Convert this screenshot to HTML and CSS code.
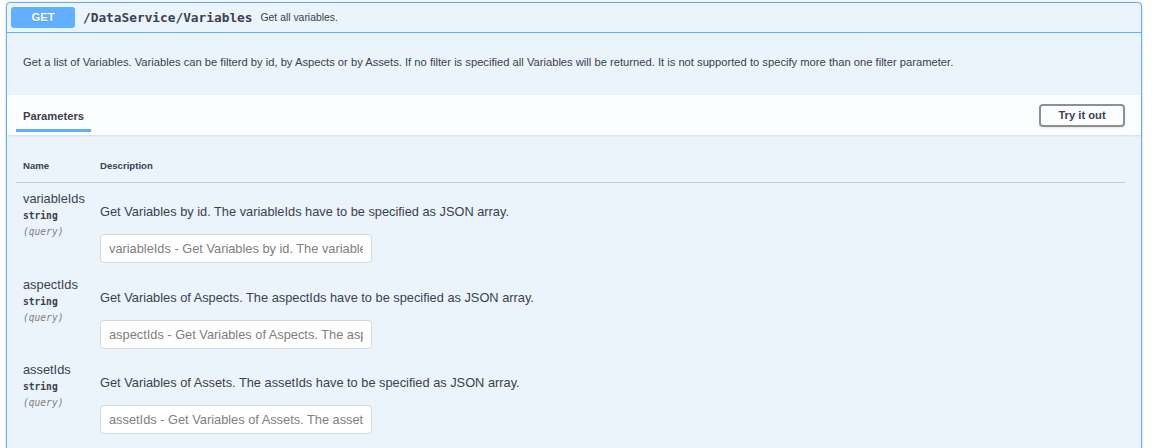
FILE: index.html
```html
<!DOCTYPE html>
<html>
<head>
<meta charset="utf-8">
<link rel="stylesheet" href="styles.css">
</head>
<body>
<div class="opblock">
  <div class="summary">
    <span class="method">GET</span>
    <span class="path">/DataService/Variables</span>
    <span class="summary-desc">Get all variables.</span>
  </div>
  <div class="description">
    <p>Get a list of Variables. Variables can be filterd by id, by Aspects or by Assets. If no filter is specified all Variables will be returned. It is not supported to specify more than one filter parameter.</p>
  </div>
  <div class="section-header">
    <div class="tab">Parameters</div>
    <button class="try-btn">Try it out</button>
  </div>
  <div class="params">
    <div class="param-head">
      <div class="col-name">Name</div>
      <div class="col-desc">Description</div>
    </div>
    <div class="param-row">
      <div class="col-name">
        <div class="pname">variableIds</div>
        <div class="ptype">string</div>
        <div class="pin">(query)</div>
      </div>
      <div class="col-desc">
        <p class="pdesc">Get Variables by id. The variableIds have to be specified as JSON array.</p>
        <input class="pinput" type="text" placeholder="variableIds - Get Variables by id. The variableIds have to be specified as JSON array.">
      </div>
    </div>
    <div class="param-row">
      <div class="col-name">
        <div class="pname">aspectIds</div>
        <div class="ptype">string</div>
        <div class="pin">(query)</div>
      </div>
      <div class="col-desc">
        <p class="pdesc">Get Variables of Aspects. The aspectIds have to be specified as JSON array.</p>
        <input class="pinput" type="text" placeholder="aspectIds - Get Variables of Aspects. The aspectIds have to be specified as JSON array.">
      </div>
    </div>
    <div class="param-row">
      <div class="col-name">
        <div class="pname">assetIds</div>
        <div class="ptype">string</div>
        <div class="pin">(query)</div>
      </div>
      <div class="col-desc">
        <p class="pdesc">Get Variables of Assets. The assetIds have to be specified as JSON array.</p>
        <input class="pinput" type="text" placeholder="assetIds - Get Variables of Assets. The assetIds have to be specified as JSON array.">
      </div>
    </div>
  </div>
</div>
</body>
</html>
```

FILE: styles.css
```css
* { box-sizing: border-box; }
html, body { margin: 0; padding: 0; background: #fff; }
body {
  font-family: "Liberation Sans", Arial, sans-serif;
  color: #3b4151;
  padding: 2px 10px 0 6px;
}
.opblock {
  border: 1px solid #61affe;
  border-radius: 4px;
  background: #ebf3fb;
  box-shadow: 0 0 3px rgba(0,0,0,.19);
  min-height: 460px;
}
.summary {
  display: flex;
  align-items: center;
  padding: 4px 4px;
  border-bottom: 1px solid #61affe;
}
.method {
  width: 64px;
  height: 21px;
  line-height: 21px;
  background: #61affe;
  color: #fff;
  border-radius: 3px;
  text-align: center;
  font-weight: bold;
  font-size: 11.2px;
  text-shadow: 0 1px 0 rgba(0,0,0,.1);
}
.path {
  margin-left: 8px;
  font-family: "DejaVu Sans Mono", monospace;
  font-weight: bold;
  font-size: 12.8px;
}
.summary-desc {
  margin-left: 8px;
  font-size: 10.4px;
}
.description {
  padding: 21px 16px 25px;
}
.description p {
  margin: 0;
  font-size: 11.2px;
  line-height: 16px;
}
.section-header {
  display: flex;
  justify-content: space-between;
  align-items: center;
  height: 40px;
  padding: 0 16px 0 9px;
  background: rgba(255,255,255,.8);
  box-shadow: 0 1px 2px rgba(0,0,0,.1);
}
.tab {
  align-self: flex-end;
  margin-bottom: 3px;
  padding: 0 7px 6px;
  line-height: 14px;
  font-size: 11.2px;
  font-weight: bold;
  border-bottom: 3px solid #61affe;
}
.try-btn {
  width: 86px;
  height: 23px;
  padding: 0;
  background: transparent;
  border: 2px solid #8f8f8f;
  border-radius: 4px;
  box-shadow: 0 1px 2px rgba(0,0,0,.1);
  font-family: "Liberation Sans", Arial, sans-serif;
  font-size: 11.2px;
  font-weight: bold;
  color: #3b4151;
}
.params {
  padding: 19px 16px 0 9px;
}
.param-head, .param-row {
  display: grid;
  grid-template-columns: 84px 1fr;
}
.param-head {
  border-bottom: 1px solid rgba(59,65,81,.2);
  font-size: 9.6px;
  font-weight: bold;
  line-height: 12px;
}
.param-head > div {
  padding: 6px 0 10px 0;
}
.param-head > .col-name {
  padding-left: 7px;
}
.param-row {
  height: 85.5px;
}
.param-row .col-name {
  padding: 8px 0 0 7px;
}
.param-row .col-desc {
  padding: 21px 0 0 0;
}
.pname {
  font-size: 12.8px;
  line-height: 16px;
}
.ptype {
  font-family: "DejaVu Sans Mono", monospace;
  font-weight: bold;
  font-size: 9.6px;
  line-height: 17px;
}
.pin {
  font-family: "DejaVu Sans Mono", monospace;
  font-style: italic;
  font-size: 9.6px;
  line-height: 16px;
  color: #808080;
}
.pdesc {
  margin: 0 0 14px;
  font-size: 12.8px;
  line-height: 16px;
}
.pinput {
  display: block;
  width: 272px;
  height: 29px;
  margin: 0;
  padding: 0 8px;
  border: 1px solid #d9d9d9;
  border-radius: 4px;
  background: #fff;
  font-family: "Liberation Sans", Arial, sans-serif;
  font-size: 12.8px;
  color: #3b4151;
}
.pinput::placeholder {
  color: #808080;
}
```
